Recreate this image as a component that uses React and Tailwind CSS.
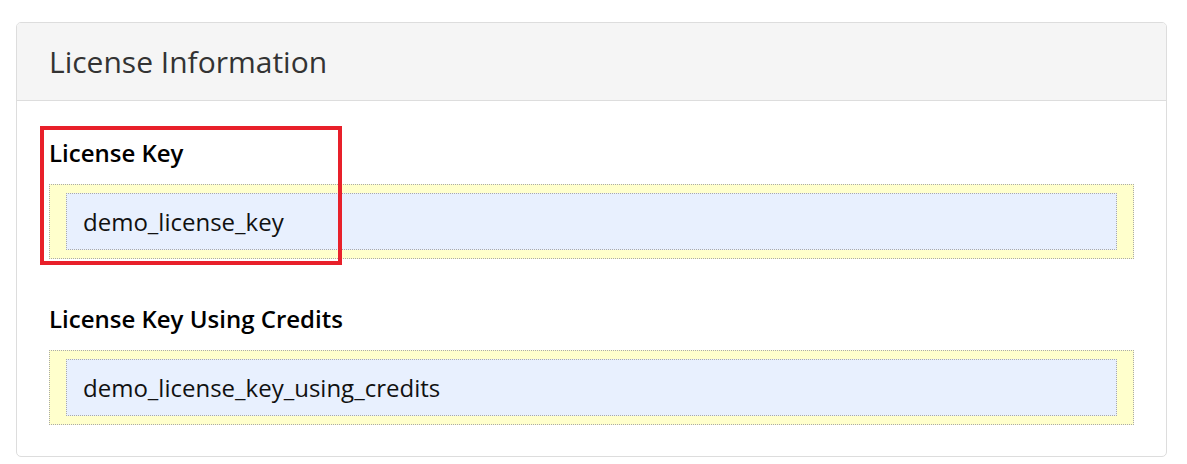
const FONT = { fontFamily: '"Open Sans", "Noto Sans", sans-serif' };

function KeyField({ label, value }) {
  return (
    <div>
      <div className="h-[33px] text-[24px] leading-[33px] font-semibold text-black mb-[15px]">{label}</div>
      <div className="border border-dotted border-[#aaa] bg-[#ffffcc] px-4 py-2">
        <div className="h-[57px] flex items-center border border-dotted border-[#aaa] bg-[#e8f0fe] px-4 text-[24px] text-[#111]">
          {value}
        </div>
      </div>
    </div>
  );
}

export default function App() {
  return (
    <div className="relative bg-white w-[1187px] h-[464px] pt-[22px] pl-4" style={FONT}>
      <div className="w-[1151px] border border-[#ddd] rounded-[5px] overflow-hidden">
        <div className="h-[78px] bg-[#f5f5f5] border-b border-[#ddd] pl-8 flex items-center">
          <h3 className="text-[30px] text-[#333] font-normal">License Information</h3>
        </div>
        <div className="px-8 pt-[35px] pb-[31px] flex flex-col gap-[43px]">
          <KeyField label="License Key" value="demo_license_key" />
          <KeyField label="License Key Using Credits" value="demo_license_key_using_credits" />
        </div>
      </div>
      {/* highlight marker */}
      <div className="absolute left-[40px] top-[126px] w-[302px] h-[139px] border-4 border-[#e8202a]" />
    </div>
  );
}
